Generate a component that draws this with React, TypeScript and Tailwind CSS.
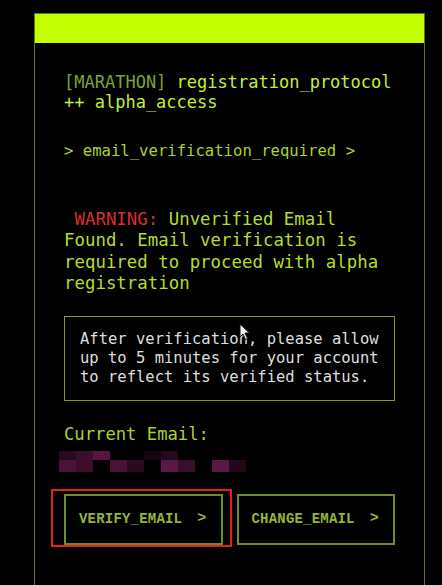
import React from "react";

const mono = { fontFamily: '"DejaVu Sans Mono", "Liberation Mono", monospace' };
const courier = { fontFamily: '"Liberation Mono", "DejaVu Sans Mono", monospace' };

function Pixels() {
  const top: [number, string][] = [
    [0, "#2a0a1f"],
    [17, "#3a0f2c"],
    [34, "#561440"],
    [85, "#150510"],
    [102, "#260a1d"],
  ];
  const bottom: [number, string][] = [
    [0, "#4a1236"],
    [17, "#3c0e2c"],
    [51, "#4a1236"],
    [68, "#2a0a1f"],
    [102, "#5a1846"],
    [119, "#34102a"],
    [153, "#5a1846"],
    [170, "#22081a"],
  ];
  return (
    <svg width="190" height="21" viewBox="0 0 190 21" className="block -ml-[5px]">
      {top.map(([x, c], i) => (
        <rect key={"t" + i} x={x} y={0} width={17} height={9} fill={c} />
      ))}
      {bottom.map(([x, c], i) => (
        <rect key={"b" + i} x={x} y={9} width={17} height={12} fill={c} />
      ))}
    </svg>
  );
}

function Btn({ label }: { label: string }) {
  return (
    <div
      className="h-[51px] border-2 border-[#6d8c2c] flex items-center justify-between pl-[13px] pr-[14px] text-[14px] font-bold text-[#94b43a] tracking-[0.2px]"
      style={courier}
    >
      <span className="whitespace-nowrap">{label}</span>
      <span className="text-[15px]">&gt;</span>
    </div>
  );
}

export default function App() {
  return (
    <div className="relative h-[585px] w-[442px] overflow-hidden bg-black pt-[13px] pl-[34px]">
      <div className="w-[391px] h-[620px] border border-[#5c7a26] flex flex-col">
        <div className="h-[29px] bg-[#c4ff00] shrink-0" />
        <div className="flex flex-col px-[29px]" style={mono}>
          <div className="mt-[29px] text-[17px] leading-[20px] whitespace-nowrap text-[#c4ee3c]">
            <span className="text-[#7da337]">[MARATHON]</span> registration_protocol
            <br />
            ++ alpha_access
          </div>
          <div className="mt-[29px] text-[15.6px] leading-[20px] whitespace-nowrap text-[#a9d42c]">
            &gt; email_verification_required &gt;
          </div>
          <div className="mt-[48px] text-[17.4px] leading-[21.3px] whitespace-nowrap text-[#b2de2c]">
            <span className="text-[#d9302e]">&nbsp;WARNING:</span> Unverified Email
            <br />
            Found. Email verification is
            <br />
            required to proceed with alpha
            <br />
            registration
          </div>
          <div className="mt-[22px] h-[85px] border border-[#7a9a30] pl-[15px] pt-[13px] text-[15.5px] leading-[19px] whitespace-nowrap text-[#dedede]">
            After verification, please allow
            <br />
            up to 5 minutes for your account
            <br />
            to reflect its verified status.
          </div>
          <div className="mt-[23px] text-[17.2px] leading-[20px] whitespace-nowrap text-[#a8d42a]">
            Current Email:
          </div>
          <div className="mt-[7px]">
            <Pixels />
          </div>
          <div className="mt-[22px] grid grid-cols-2 gap-[14px]">
            <Btn label="VERIFY_EMAIL" />
            <Btn label="CHANGE_EMAIL" />
          </div>
        </div>
      </div>
      <div className="absolute left-[51px] top-[489px] w-[181px] h-[58px] border-2 border-[#e3201f]" />
      <svg className="absolute left-[239px] top-[323px]" width="12" height="18" viewBox="0 0 12 18">
        <path d="M1 1 L1 14 L4 11 L6.5 16.5 L8.5 15.5 L6 10 L10.5 10 Z" fill="#f2f2f2" stroke="#111" strokeWidth="1" />
      </svg>
    </div>
  );
}
